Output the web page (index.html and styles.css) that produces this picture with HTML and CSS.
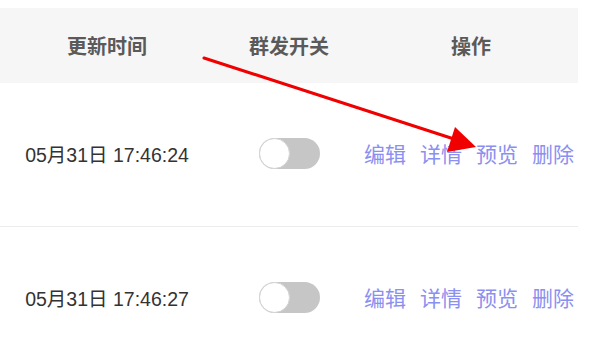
FILE: index.html
```html
<!DOCTYPE html>
<html lang="en">
<head>
  <meta charset="UTF-8" />
  <title>群发列表</title>
  <link rel="stylesheet" href="styles.css">
</head>
<body>
  <div class="list">
    <table class="mass-table">
      <thead>
        <tr>
          <th class="col-time">更新时间</th>
          <th class="col-switch">群发开关</th>
          <th class="col-ops">操作</th>
        </tr>
      </thead>
      <tbody>
        <tr>
          <td class="col-time">05月31日 17:46:24</td>
          <td class="col-switch"><span class="toggle"><span class="knob"></span></span></td>
          <td class="col-ops">
            <div class="ops">
              <a href="#">编辑</a><a href="#">详情</a><a href="#">预览</a><a href="#">删除</a>
            </div>
          </td>
        </tr>
        <tr>
          <td class="col-time">05月31日 17:46:27</td>
          <td class="col-switch"><span class="toggle"><span class="knob"></span></span></td>
          <td class="col-ops">
            <div class="ops">
              <a href="#">编辑</a><a href="#">详情</a><a href="#">预览</a><a href="#">删除</a>
            </div>
          </td>
        </tr>
      </tbody>
    </table>

    <!-- annotation arrow drawn over the table -->
    <svg class="arrow" width="600" height="352" viewBox="0 0 600 352">
      <line x1="204" y1="58" x2="454" y2="139" stroke="#f00000" stroke-width="3" stroke-linecap="round"/>
      <polygon points="476,147 447,152 455,127" fill="#f00000"/>
    </svg>
  </div>
</body>
</html>
```

FILE: styles.css
```css
body {
  margin: 0;
  padding-top: 8px;
  background: #fff;
  font-family: "Liberation Sans", "Noto Sans CJK SC", sans-serif;
  overflow: hidden;
}
.list {
  width: 578px;
}
.mass-table {
  width: 578px;
  border-collapse: collapse;
  table-layout: fixed;
}
.mass-table th {
  height: 75px;
  background: #f6f6f6;
  color: #5a5a5a;
  font-family: "Noto Sans CJK SC", sans-serif;
  font-size: 20px;
  font-weight: bold;
  text-align: center;
  padding: 0;
}
.mass-table td {
  height: 140px;
  padding: 0 0 3px;
  text-align: center;
  border-bottom: 1px solid #ececec;
  color: #333;
  font-size: 19.5px;
}
.mass-table tbody tr:last-child td {
  border-bottom: none;
}
.col-time {
  width: 214px;
}
.col-switch {
  width: 150px;
}
.col-ops {
  width: 214px;
}
td.col-ops {
  padding-right: 4px;
}
.toggle {
  display: inline-block;
  vertical-align: middle;
  position: relative;
  width: 61px;
  height: 31px;
  border-radius: 16px;
  background: #c6c6c6;
}
.knob {
  position: absolute;
  left: 0;
  top: 0;
  width: 29px;
  height: 29px;
  border-radius: 50%;
  background: #fff;
  border: 1px solid #d4d4d4;
}
.ops {
  display: flex;
  justify-content: center;
  gap: 14px;
  white-space: nowrap;
}
.ops a {
  color: #8b8ff0;
  text-decoration: none;
  font-family: "Noto Sans CJK SC", sans-serif;
  font-size: 21px;
}
.arrow {
  position: absolute;
  left: 0;
  top: 0;
  pointer-events: none;
}
```
